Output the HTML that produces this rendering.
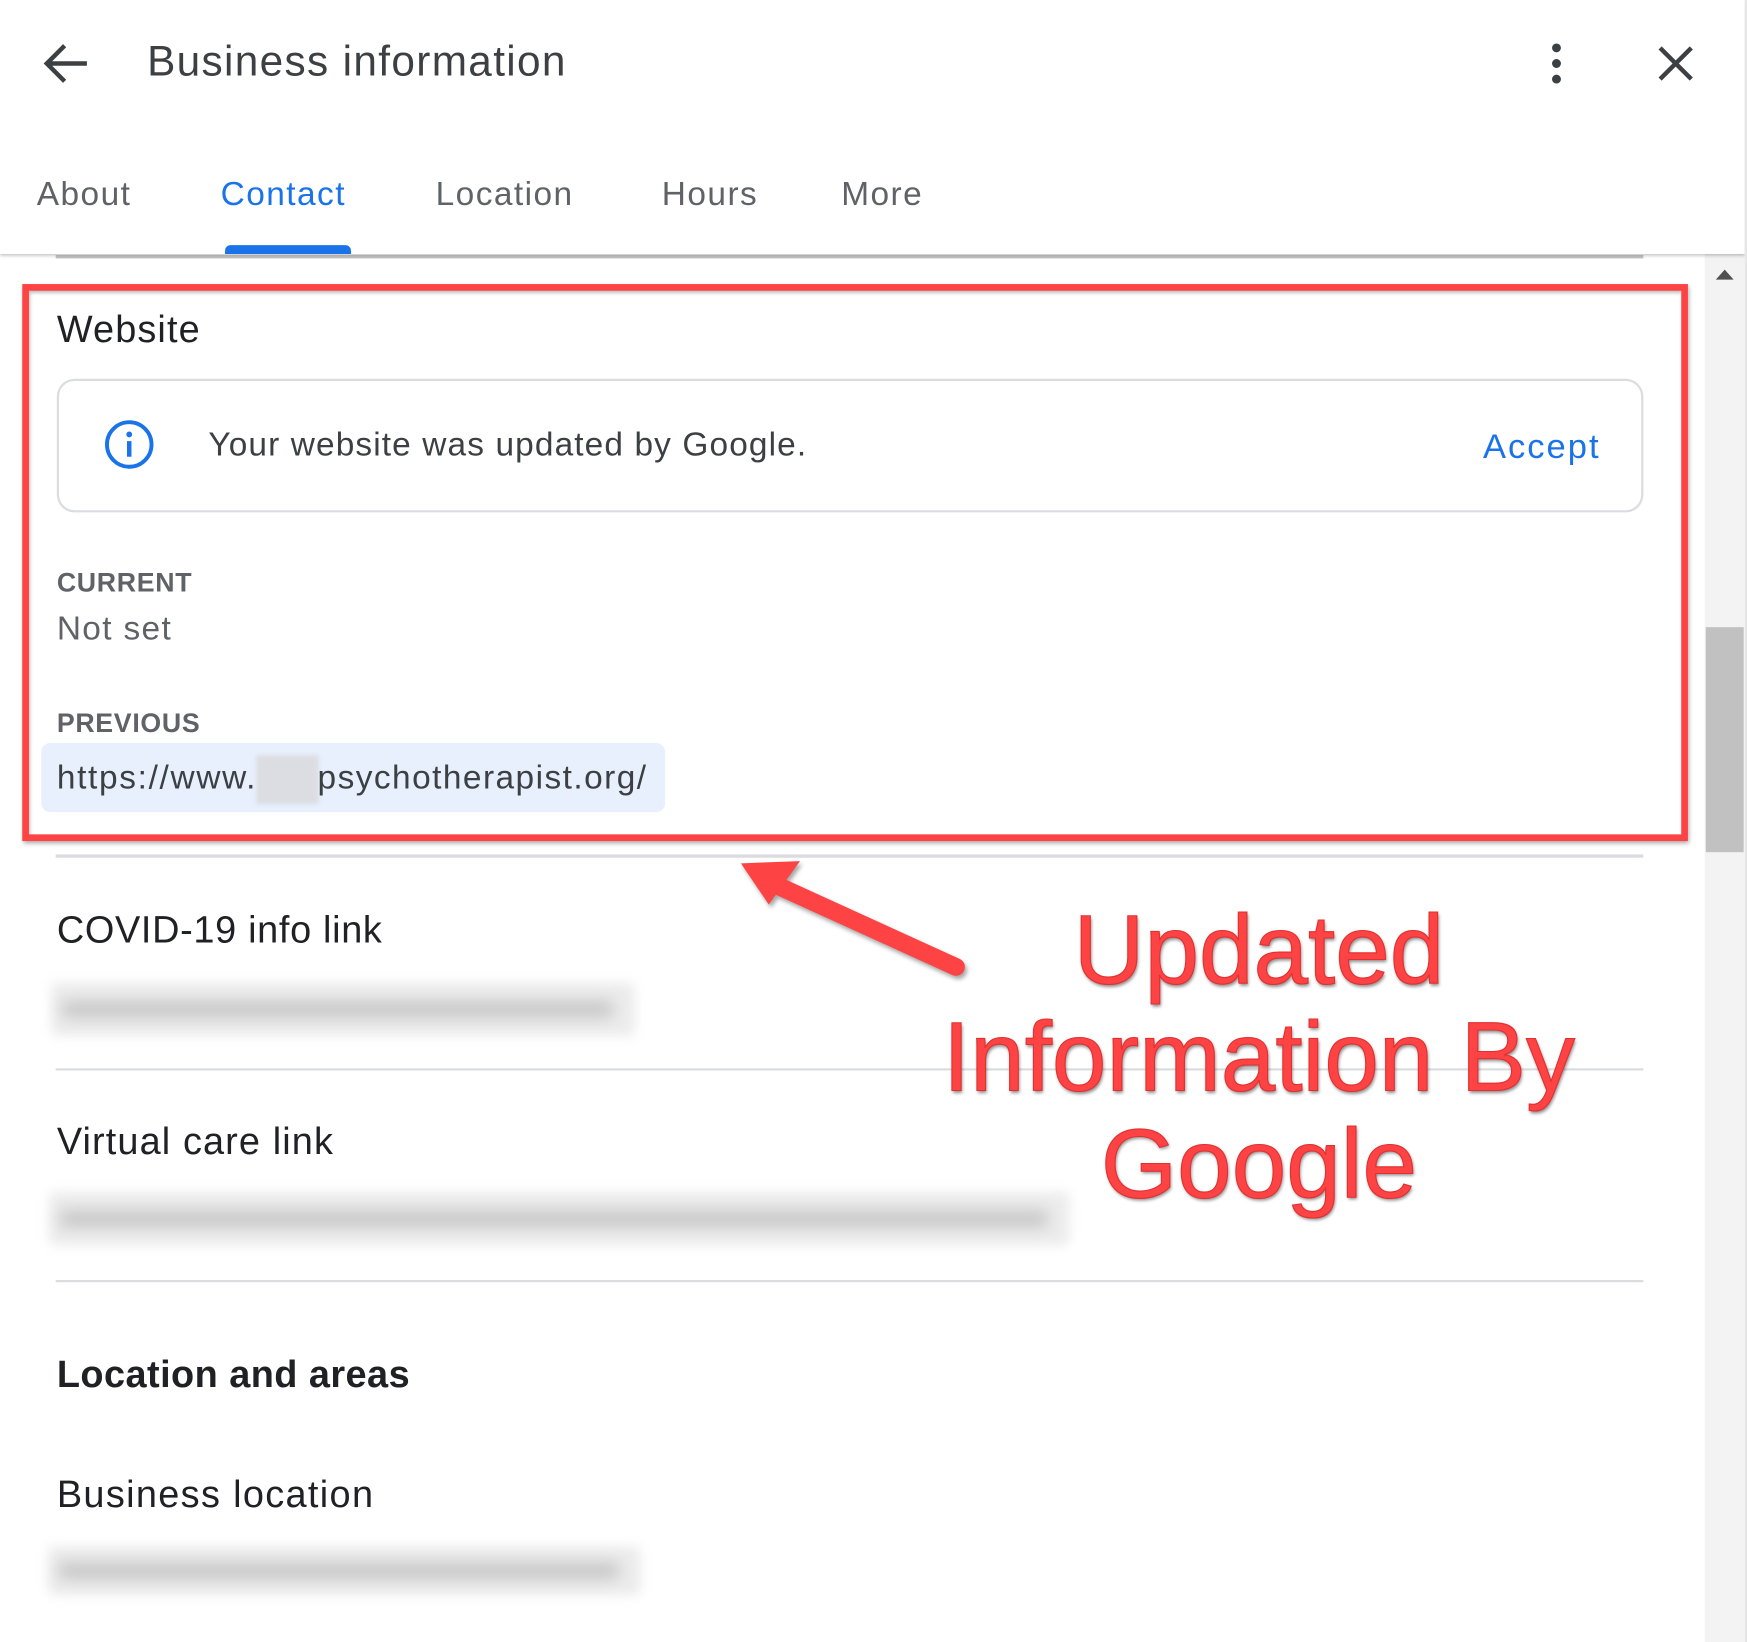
<!DOCTYPE html>
<html><head><meta charset="utf-8"><style>
html,body{margin:0;padding:0;background:#fff;overflow:hidden}
body{width:1747px;height:1642px;position:relative}
#w{position:absolute;left:0;top:0;width:1568px;height:1474px;transform:scale(1.11416,1.11397);transform-origin:0 0;font-family:"Liberation Sans",Arial,sans-serif;background:#fff}
.a{position:absolute;white-space:nowrap}
.line{position:absolute;left:50px;width:1425px;height:2px;background:#dadce0}
.blur{position:absolute;background:#ececec;filter:blur(5px);border-radius:6px}
.blur i{position:absolute;left:10px;right:20px;top:35%;height:30%;background:#c4c4c4;filter:blur(5px)}
</style></head><body><div id="w">
<div class="a" style="left:0;top:0;width:1566px;height:228px;background:#fff;box-shadow:0 2px 3px rgba(0,0,0,.25);z-index:2"></div>
<div class="a" style="left:1566px;top:0;width:2px;height:1474px;background:#e6e6e6;z-index:3"></div>
<svg class="a" style="left:38px;top:37px;z-index:3" width="42" height="40" viewBox="0 0 42 40"><path d="M40 20H4M20 4L4 20l16 16" stroke="#3c4043" stroke-width="4" fill="none"/></svg>
<div class="a" style="left:132px;top:35px;font-size:38px;color:#3c4043;z-index:3;letter-spacing:1.2px">Business information</div>
<svg class="a" style="left:1387px;top:38px;z-index:3" width="20" height="38"><circle cx="10" cy="5" r="4" fill="#3c4043"/><circle cx="10" cy="19" r="4" fill="#3c4043"/><circle cx="10" cy="33" r="4" fill="#3c4043"/></svg>
<svg class="a" style="left:1487px;top:40px;z-index:3" width="34" height="34"><path d="M3 3L31 31M31 3L3 31" stroke="#3c4043" stroke-width="4"/></svg>
<div class="a" style="left:33px;top:158px;font-size:30px;color:#5f6368;z-index:3;letter-spacing:1.3px">About</div>
<div class="a" style="left:198px;top:158px;font-size:30px;color:#1a73e8;z-index:3;letter-spacing:1.3px">Contact</div>
<div class="a" style="left:391px;top:158px;font-size:30px;color:#5f6368;z-index:3;letter-spacing:1.3px">Location</div>
<div class="a" style="left:594px;top:158px;font-size:30px;color:#5f6368;z-index:3;letter-spacing:1.3px">Hours</div>
<div class="a" style="left:755px;top:158px;font-size:30px;color:#5f6368;z-index:3;letter-spacing:1.3px">More</div>
<div class="a" style="left:202px;top:220px;width:113px;height:8px;background:#1a73e8;border-radius:5px 5px 0 0;z-index:3"></div>
<div class="line" style="top:229px;height:3px;background:#c4c4c4"></div>
<div class="a" style="left:1530px;top:228px;width:36px;height:1246px;background:#f3f3f3"></div>
<div class="a" style="left:1540px;top:242px;width:0;height:0;border-left:8px solid transparent;border-right:8px solid transparent;border-bottom:9px solid #505050"></div>
<div class="a" style="left:1531px;top:563px;width:34px;height:202px;background:#c1c1c1"></div>
<div class="a" style="left:20px;top:255px;width:1483px;height:488px;border:6px solid #fd4343;box-shadow:1px 2px 4px rgba(0,0,0,.35),inset 1px 2px 3px rgba(0,0,0,.25)"></div>
<div class="a" style="left:51px;top:277px;font-size:34px;color:#202124;letter-spacing:1px">Website</div>
<div class="a" style="left:51px;top:340px;width:1420px;height:116px;border:2px solid #dadce0;border-radius:16px"></div>
<svg class="a" style="left:93px;top:376px" width="46" height="46"><circle cx="23" cy="23" r="20" stroke="#1a73e8" stroke-width="3.5" fill="none"/><rect x="21" y="20" width="4" height="14" fill="#1a73e8"/><circle cx="23" cy="14" r="2.6" fill="#1a73e8"/></svg>
<div class="a" style="left:187px;top:383px;font-size:30px;color:#3c4043;letter-spacing:1px">Your website was updated by Google.</div>
<div class="a" style="left:1331px;top:383px;font-size:31px;color:#1a73e8;letter-spacing:1.8px">Accept</div>
<div class="a" style="left:51px;top:510px;font-size:24px;font-weight:bold;color:#5f6368;letter-spacing:0.6px">CURRENT</div>
<div class="a" style="left:51px;top:548px;font-size:30px;color:#5f6368;letter-spacing:1.2px">Not set</div>
<div class="a" style="left:51px;top:636px;font-size:24px;font-weight:bold;color:#5f6368;letter-spacing:0.6px">PREVIOUS</div>
<div class="a" style="left:37px;top:667px;width:560px;height:62px;background:#e8f0fe;border-radius:8px"></div>
<div class="a" style="left:230px;top:678px;width:56px;height:44px;background:#dcdde2;filter:blur(2px)"></div>
<div class="a" style="left:51px;top:682px;font-size:30px;color:#3c4043;letter-spacing:1.5px">https://www.</div>
<div class="a" style="left:285px;top:682px;font-size:30px;color:#3c4043;letter-spacing:1.3px">psychotherapist.org/</div>
<div class="line" style="top:767px;height:3px"></div>
<div class="a" style="left:51px;top:816px;font-size:34px;color:#202124;letter-spacing:0.6px">COVID-19 info link</div>
<div class="blur" style="left:46px;top:882px;width:524px;height:48px"><i></i></div>
<div class="line" style="top:959px"></div>
<div class="a" style="left:51px;top:1006px;font-size:34px;color:#202124;letter-spacing:1px">Virtual care link</div>
<div class="blur" style="left:44px;top:1070px;width:916px;height:48px"><i></i></div>
<div class="line" style="top:1149px"></div>
<div class="a" style="left:51px;top:1215px;font-size:34px;color:#202124;font-weight:bold;letter-spacing:0.4px">Location and areas</div>
<div class="a" style="left:51px;top:1323px;font-size:34px;color:#202124;letter-spacing:1.2px">Business location</div>
<div class="blur" style="left:43px;top:1388px;width:532px;height:44px"><i></i></div>
<svg class="a" style="left:650px;top:760px;filter:drop-shadow(2px 3px 2px rgba(0,0,0,.35))" width="230" height="130"><path d="M208 108L50 36" stroke="#fd4343" stroke-width="16" stroke-linecap="round"/><path d="M15 15L68 13 40 52Z" fill="#fd4343"/></svg>
<div class="a" style="left:780px;top:805px;width:700px;text-align:center;font-size:88px;line-height:96px;color:#fd4343;text-shadow:1px 2px 3px rgba(0,0,0,.45);-webkit-text-stroke:1px #e03030">Updated<br>Information By<br>Google</div>
</div></body></html>
